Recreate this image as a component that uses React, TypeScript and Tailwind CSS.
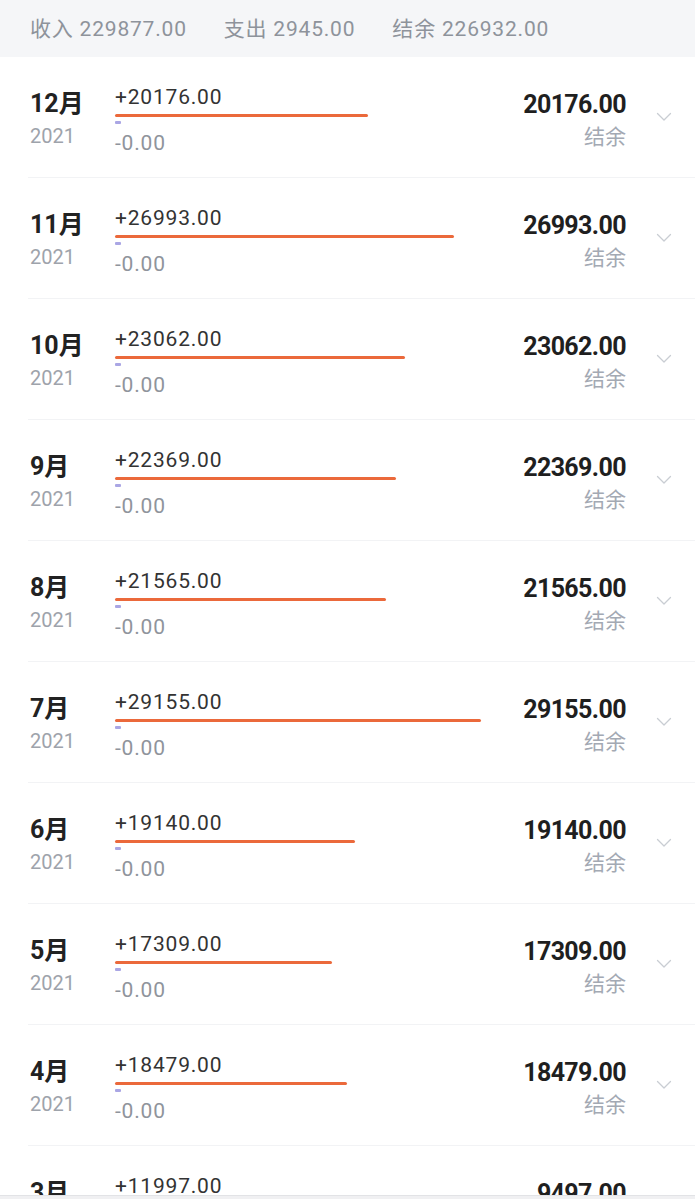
import React from "react";

const MAX_BAR = 366;

type Month = {
  month: string;
  year: string;
  income: number;
  expense: number;
  balance: number;
};

const months: Month[] = [
  { month: "12月", year: "2021", income: 20176, expense: 0, balance: 20176 },
  { month: "11月", year: "2021", income: 26993, expense: 0, balance: 26993 },
  { month: "10月", year: "2021", income: 23062, expense: 0, balance: 23062 },
  { month: "9月", year: "2021", income: 22369, expense: 0, balance: 22369 },
  { month: "8月", year: "2021", income: 21565, expense: 0, balance: 21565 },
  { month: "7月", year: "2021", income: 29155, expense: 0, balance: 29155 },
  { month: "6月", year: "2021", income: 19140, expense: 0, balance: 19140 },
  { month: "5月", year: "2021", income: 17309, expense: 0, balance: 17309 },
  { month: "4月", year: "2021", income: 18479, expense: 0, balance: 18479 },
  { month: "3月", year: "2021", income: 11997, expense: 0, balance: 9497 },
];

const maxIncome = Math.max(...months.map((m) => m.income));

function Chevron() {
  return (
    <svg width="16" height="10" viewBox="0 0 16 10" fill="none">
      <path d="M1.5 1.5L8 8L14.5 1.5" stroke="#c9cdd3" strokeWidth="1.3" strokeLinecap="round" strokeLinejoin="round" />
    </svg>
  );
}

function MonthRow({ m }: { m: Month }) {
  const width = Math.round((m.income / maxIncome) * MAX_BAR);
  return (
    <div className="ml-[28px] h-[121px] shrink-0 border-b border-[#f2f3f5] flex pl-[2px]">
      <div className="w-[85px] pt-[32px] flex flex-col">
        <span className="text-[25px] leading-[30px] font-bold text-[#222]">{m.month}</span>
        <span className="mt-[5px] text-[20px] leading-[24px] text-[#9ea3ab]">{m.year}</span>
      </div>
      <div className="flex-1 pt-[28px] flex flex-col items-start">
        <span className="text-[21px] leading-[24px] tracking-[0.8px] text-[#333]">+{m.income.toFixed(2)}</span>
        <div className="mt-[5px] h-[3px] rounded-full bg-[#eb693b]" style={{ width }} />
        <div className="mt-[4px] h-[3px] w-[6px] rounded-[1px] bg-[#aaa6e4]" />
        <span className="mt-[7px] text-[21px] leading-[24px] tracking-[0.8px] text-[#8f949c]">-{m.expense.toFixed(2)}</span>
      </div>
      <div className="pt-[33px] flex flex-col items-end">
        <span className="text-[25px] leading-[30px] font-bold tracking-[-0.6px] text-[#1f1f1f]">{m.balance.toFixed(2)}</span>
        <span className="mt-[5px] text-[21px] leading-[24px] text-[#a3a9b3]">结余</span>
      </div>
      <div className="w-[69px] flex items-center justify-center pl-[6px]">
        <Chevron />
      </div>
    </div>
  );
}

export default function App() {
  return (
    <div
      className="w-[695px] h-[1199px] overflow-hidden bg-white flex flex-col relative"
      style={{ fontFamily: "Roboto, 'Noto Sans CJK SC', sans-serif" }}
    >
      <div className="h-[57px] shrink-0 bg-[#f5f6f8] flex items-center pt-[2px] pl-[30px] gap-[37px] text-[21px] tracking-[0.8px] text-[#8e939b]">
        <span>收入 229877.00</span>
        <span>支出 2945.00</span>
        <span>结余 226932.00</span>
      </div>
      {months.map((m) => (
        <MonthRow key={m.month} m={m} />
      ))}
      <div className="absolute left-0 right-0 bottom-0 h-[4px] bg-[#f0f0f2] border-t border-[#e2e3e6]" />
    </div>
  );
}
